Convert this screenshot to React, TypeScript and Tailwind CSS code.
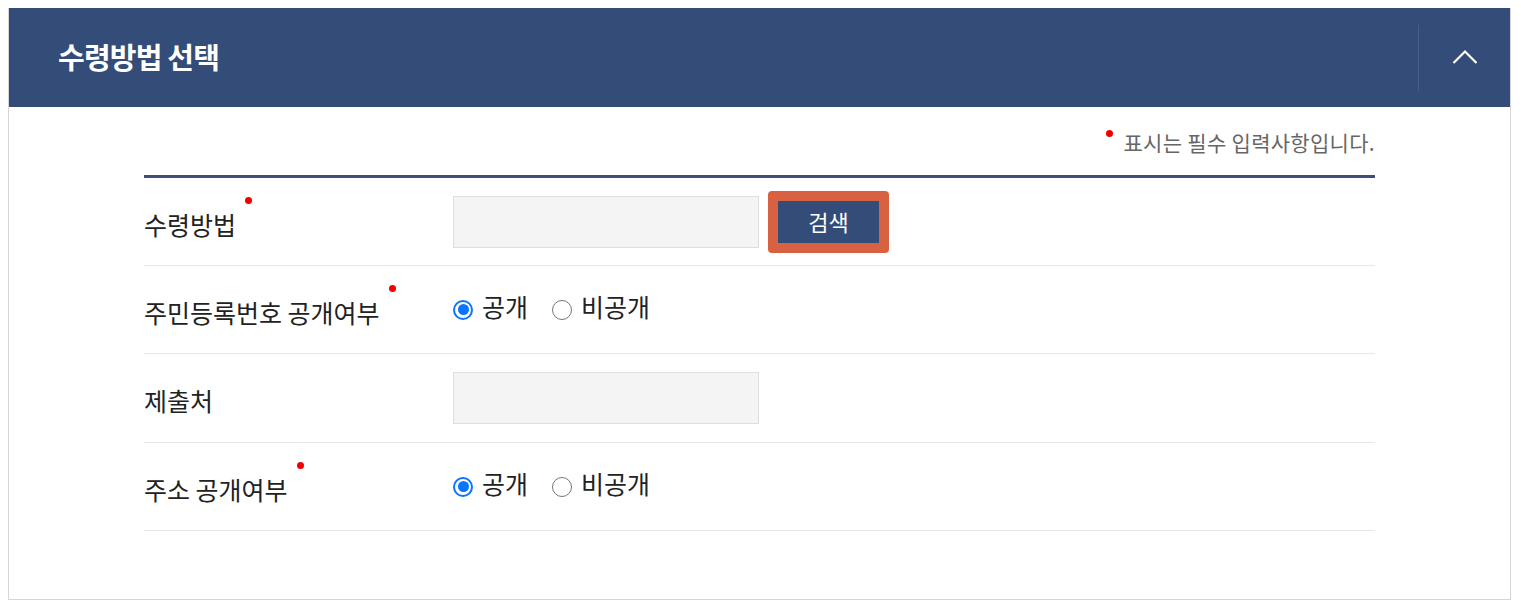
import React, { useState } from "react";

const font = "font-['Noto_Sans_CJK_KR','Noto_Sans',sans-serif]";

const Label = ({ text, required }: { text: string; required?: boolean }) => (
  <div className="w-[309px] shrink-0">
    <span className="relative inline-block text-[25px] leading-[36px] text-[#222] pt-[4px]">
      {text}
      {required && (
        <span className="absolute left-full ml-[9px] top-[-5px] w-[7px] h-[7px] rounded-full bg-[#f20000]" />
      )}
    </span>
  </div>
);

const Radio = ({ checked, onClick, label }: { checked: boolean; onClick: () => void; label: string }) => (
  <button type="button" onClick={onClick} className="flex items-center gap-[9px] text-[25px] text-[#222]">
    {checked ? (
      <span className="w-[20px] h-[20px] rounded-full border-[2px] border-[#0a75ff] flex items-center justify-center">
        <span className="w-[11px] h-[11px] rounded-full bg-[#0a75ff]" />
      </span>
    ) : (
      <span className="w-[20px] h-[20px] rounded-full border border-[#767676] bg-white" />
    )}
    <span className="leading-none -mt-[6px]">{label}</span>
  </button>
);

const OpenRadios = () => {
  const [open, setOpen] = useState(true);
  return (
    <div className="flex items-center gap-[24px]">
      <Radio checked={open} onClick={() => setOpen(true)} label="공개" />
      <Radio checked={!open} onClick={() => setOpen(false)} label="비공개" />
    </div>
  );
};

const Field = () => (
  <div className="w-[306px] h-[52px] bg-[#f4f4f4] border border-[#dedede]" />
);

export default function App() {
  return (
    <div className={`bg-white pt-2 pl-2 pr-[10px] pb-[9px] ${font}`}>
      <div className="border border-[#d6d6d6] border-t-0">
        <div className="h-[99px] bg-[#344c78] flex items-center justify-between pl-[49px]">
          <h2 className="text-[29px] font-bold text-white tracking-[-0.8px] -mt-[2px]">수령방법 선택</h2>
          <div className="flex items-center h-full">
            <div className="w-px h-[66px] bg-[#4a5e86]" />
            <button type="button" className="w-[91px] h-full flex items-center justify-center text-white">
              <svg width="26" height="16" viewBox="0 0 26 16" fill="none" className="-mt-[2px]">
                <path d="M1.5 14L13 2.5L24.5 14" stroke="white" strokeWidth="2.2" />
              </svg>
            </button>
          </div>
        </div>

        <div className="px-[135px] pt-[20px] pb-[68px]">
          <p className="text-right text-[21px] leading-[30px] tracking-[0.3px] text-[#666] pb-[18px]">
            <span className="relative inline-block w-[14px] mr-[3px]">
              <span className="absolute left-0 top-[-21px] w-[7px] h-[7px] rounded-full bg-[#f20000]" />
            </span>
            표시는 필수 입력사항입니다.
          </p>
          <div className="border-t-[3px] border-[#3c5079]">
            <div className="h-[88px] flex items-center border-b border-[#e8e8e8]">
              <Label text="수령방법" required />
              <Field />
              <button
                type="button"
                className="ml-[9px] w-[121px] h-[62px] rounded-[4px] bg-[#d76141] p-[10px] flex"
              >
                <span className="flex-1 bg-[#344c78] text-white text-[22px] flex items-center justify-center">
                  검색
                </span>
              </button>
            </div>
            <div className="h-[88px] flex items-center border-b border-[#e8e8e8]">
              <Label text="주민등록번호 공개여부" required />
              <OpenRadios />
            </div>
            <div className="h-[89px] flex items-center border-b border-[#e8e8e8]">
              <Label text="제출처" />
              <Field />
            </div>
            <div className="h-[88px] flex items-center border-b border-[#e8e8e8]">
              <Label text="주소 공개여부" required />
              <OpenRadios />
            </div>
          </div>
        </div>
      </div>
    </div>
  );
}
